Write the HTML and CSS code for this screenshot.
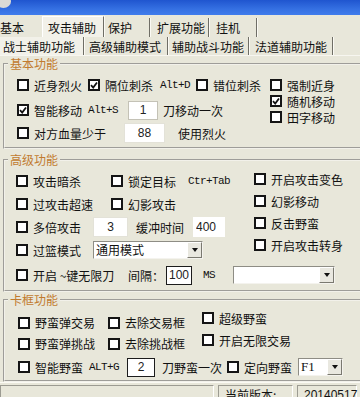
FILE: index.html
```html
<!DOCTYPE html>
<html lang="zh-CN">
<head>
  <meta charset="UTF-8" />
  <title>攻击辅助</title>
  <link rel="stylesheet" href="styles.css">
</head>
<body>
  <!-- 标题栏 -->
  <div class="titlebar"><span class="sysicon"></span></div>

  <!-- 主选项卡 -->
  <div class="tabs tabs-main">
    <div class="tab t1">基本</div>
    <div class="tab t2 active">攻击辅助</div>
    <div class="tab t3">保护</div>
    <div class="tab t4">扩展功能</div>
    <div class="tab t5">挂机</div>
  </div>
  <!-- 子选项卡 -->
  <div class="tabs tabs-sub">
    <div class="tab s1 active">战士辅助功能</div>
    <div class="tab s2">高级辅助模式</div>
    <div class="tab s3">辅助战斗功能</div>
    <div class="tab s4">法道辅助功能</div>
  </div>

  <!-- 基本功能 -->
  <fieldset class="group g-basic">
    <legend>基本功能</legend>
    <div class="group-body split">
      <div class="col-main">
        <div class="row r1">
          <label class="chk"><span class="box"></span>近身烈火</label>
          <label class="chk"><span class="box"><svg viewBox="0 0 8 8"><path d="M1 4.2 L3.2 6.5 L7 1.5"/></svg></span>隔位刺杀</label>
          <span class="key">Alt+D</span>
          <label class="chk"><span class="box"></span>错位刺杀</label>
        </div>
        <div class="row r2">
          <label class="chk"><span class="box"><svg viewBox="0 0 8 8"><path d="M1 4.2 L3.2 6.5 L7 1.5"/></svg></span>智能移动</label>
          <span class="key">Alt+S</span>
          <input class="num w30" value="1">
          <span>刀移动一次</span>
        </div>
        <div class="row r3">
          <label class="chk"><span class="box"></span>对方血量少于</label>
          <input class="num w41 soft" value="88">
          <span>使用烈火</span>
        </div>
      </div>
      <div class="col-side">
        <label class="chk"><span class="box"></span>强制近身</label>
        <label class="chk"><span class="box"><svg viewBox="0 0 8 8"><path d="M1 4.2 L3.2 6.5 L7 1.5"/></svg></span>随机移动</label>
        <label class="chk"><span class="box"></span>田字移动</label>
      </div>
    </div>
  </fieldset>

  <!-- 高级功能 -->
  <fieldset class="group g-adv">
    <legend>高级功能</legend>
    <div class="group-body">
      <div class="split">
        <div class="col-main">
          <div class="row r1">
            <label class="chk"><span class="box"></span>攻击暗杀</label>
            <label class="chk"><span class="box"></span>锁定目标</label>
            <span class="key">Ctr+Tab</span>
          </div>
          <div class="row r2">
            <label class="chk"><span class="box"></span>过攻击超速</label>
            <label class="chk"><span class="box"></span>幻影攻击</label>
          </div>
          <div class="row r3">
            <label class="chk"><span class="box"></span>多倍攻击</label>
            <input class="num w35 soft" value="3">
            <span>缓冲时间</span>
            <input class="num w32 bare" value="400">
          </div>
          <div class="row r4">
            <label class="chk"><span class="box"></span>过篮模式</label>
            <div class="dropdown w110"><span class="val">通用模式</span><span class="arrow"></span></div>
          </div>
        </div>
        <div class="col-side">
          <label class="chk"><span class="box"></span>开启攻击变色</label>
          <label class="chk"><span class="box"></span>幻影移动</label>
          <label class="chk"><span class="box"></span>反击野蛮</label>
          <label class="chk"><span class="box"></span>开启攻击转身</label>
        </div>
      </div>
      <div class="row r5">
        <label class="chk"><span class="box"></span>开启 ~键无限刀</label>
        <span>间隔：</span>
        <input class="num w26 dark left" value="100">
        <span class="key">MS</span>
        <div class="dropdown w102"><span class="val"></span><span class="arrow"></span></div>
      </div>
    </div>
  </fieldset>

  <!-- 卡框功能 -->
  <fieldset class="group g-box">
    <legend>卡框功能</legend>
    <div class="group-body">
      <div class="split">
        <div class="col-main">
          <div class="row r1">
            <label class="chk"><span class="box"></span>野蛮弹交易</label>
            <label class="chk"><span class="box"></span>去除交易框</label>
          </div>
          <div class="row r2">
            <label class="chk"><span class="box"></span>野蛮弹挑战</label>
            <label class="chk"><span class="box"></span>去除挑战框</label>
          </div>
        </div>
        <div class="col-side">
          <label class="chk"><span class="box"></span>超级野蛮</label>
          <label class="chk"><span class="box"></span>开启无限交易</label>
        </div>
      </div>
      <div class="row r3">
        <label class="chk"><span class="box"></span>智能野蛮</label>
        <span class="key">ALT+G</span>
        <input class="num w28 dark" value="2">
        <span>刀野蛮一次</span>
        <label class="chk"><span class="box"></span>定向野蛮</label>
        <div class="dropdown w45"><span class="val fkey">F1</span><span class="arrow"></span></div>
      </div>
    </div>
  </fieldset>

  <!-- 状态栏 -->
  <div class="statusbar">
    <div class="pane p1"></div>
    <div class="pane p2">当前版本:</div>
    <div class="pane p3">20140517</div>
  </div>
</body>
</html>
```

FILE: styles.css
```css
html, body { margin:0; padding:0; }
body {
  width:360px;
  height:397px;
  overflow:hidden;
  background:#e8e7da;
  font-family:"Noto Sans CJK SC", "Noto Sans", sans-serif;
  font-size:12px;
  color:#111;
}
/* 标题栏 */
.titlebar {
  position:relative;
  height:15px;
  background:linear-gradient(#1f55cf, #3570e2 60%, #3f7cec);
  overflow:hidden;
}
.titlebar .sysicon {
  position:absolute;
  left:-4px; top:-5px;
  width:15px; height:13px;
  border-radius:50%;
  background:#dcdbd6;
}
/* 选项卡 */
.tabs { display:flex; }
.tabs-main { height:22px; }
.tabs-sub { height:18px; border-bottom:1px solid #f7f6f0; }
.tab {
  box-sizing:border-box;
  display:flex;
  align-items:center;
  white-space:nowrap;
  border-right:1px solid #6f6e66;
  box-shadow:1px 0 0 #fbfaf4;
}
.tabs-main .tab { margin-top:3px; }
.tab.active { background:#f2f1e9; }
.tabs-main .tab.active { margin-top:1px; border-top:1px solid #fff; border-left:1px solid #fff; }
.t1 { width:42px; border-right:0; box-shadow:none; }
.t2 { width:62px; padding-left:5px; }
.t3 { width:46px; padding-left:4px; }
.t4 { width:59px; padding-left:7px; }
.t5 { width:48px; padding-left:7px; }
.s1 { width:84px; padding-left:3px; }
.s2 { width:84px; padding-left:5px; }
.s3 { width:81px; padding-left:4px; }
.s4 { width:84px; padding-left:6px; }
/* 分组框 */
.group {
  box-sizing:border-box;
  width:380px;
  min-width:0;
  margin:0 0 0 3px;
  padding:0;
  border:2px groove #f2f1ea;
}
.group legend {
  margin-left:3px;
  padding:0 2px;
  line-height:16px;
  color:#c17b2f;
}
.g-adv { margin-top:3px; }
.split { display:flex; }
.row { display:grid; align-items:center; white-space:nowrap; }
.col-side { display:flex; flex-direction:column; }
.col-side .chk { flex:none; }

.g-basic .group-body { padding:0 0 3px 12px; }
.g-basic .col-main { width:253px; }
.g-basic .r1 { height:26px; grid-template-columns:71px 72px 36px auto; }
.g-basic .r2 { height:24px; grid-template-columns:71px 40px 35px auto; }
.g-basic .r3 { height:22px; grid-template-columns:107px 54px auto; }
.g-basic .col-side { padding-top:5px; }
.g-basic .col-side .chk { height:16px; }

.g-adv .group-body { padding-left:11px; }
.g-adv .col-main { width:238px; }
.g-adv .r1 { height:26px; grid-template-columns:95px 77px auto; }
.g-adv .r2 { height:20px; grid-template-columns:95px auto; }
.g-adv .r3 { height:26px; grid-template-columns:77px 43px 57px auto; }
.g-adv .r4 { height:20px; grid-template-columns:77px auto; }
.g-adv .r5 { height:30px; grid-template-columns:112px 38px 37px 30px auto; }
.g-adv .col-side .chk { height:22px; }

.g-box .group-body { padding-left:13px; }
.g-box .col-main { width:184px; padding-top:4px; }
.g-box .r1, .g-box .r2 { height:21px; grid-template-columns:90px auto; }
.g-box .r3 { height:26px; grid-template-columns:71px 38px 35px 65px 71px auto; }
.g-box .col-side { margin-top:-1px; }
.g-box .col-side .chk { height:22px; }
/* 复选框 */
.chk { display:flex; align-items:center; gap:5px; }
.box {
  box-sizing:border-box;
  flex:none;
  width:12px; height:12px;
  border:2px solid #151515;
  background:#fff;
  display:flex;
  align-items:center;
  justify-content:center;
}
.box svg { width:8px; height:8px; }
.box path { fill:none; stroke:#111; stroke-width:1.8; }
.key {
  font-family:"Liberation Mono", monospace;
  font-size:11px;
  letter-spacing:-0.6px;
}
/* 输入框 */
.num {
  box-sizing:border-box;
  height:19px;
  margin:0;
  padding:0;
  border:1px solid #c4c2b6;
  background:#fff;
  font:12px "Liberation Sans", sans-serif;
  color:#222;
  text-align:center;
  outline:none;
}
.num.soft { height:20px; border-color:#e3e2d8; }
.num.dark { border-color:#1c1c1c; }
.num.bare { height:20px; border-color:#fff; text-align:left; padding-left:2px; }
.num.left { text-align:left; padding-left:2px; }
.w26 { width:26px; }
.w28 { width:28px; }
.w30 { width:30px; }
.w32 { width:32px; }
.w35 { width:35px; }
.w41 { width:41px; }
/* 下拉框 */
.dropdown {
  box-sizing:border-box;
  height:18px;
  display:flex;
  background:#fff;
  border:1px solid;
  border-color:#8e8d85 #f4f3ee #f4f3ee #8e8d85;
}
.dropdown .val { flex:1; padding-left:2px; line-height:16px; overflow:hidden; }
.dropdown .val.fkey { font-family:"Liberation Serif", serif; font-size:13px; }
.dropdown .arrow {
  box-sizing:border-box;
  width:15px;
  background:#e9e8e0;
  border:1px solid;
  border-color:#fff #7a7970 #7a7970 #fff;
  display:flex;
  align-items:center;
  justify-content:center;
}
.dropdown .arrow::after {
  content:"";
  border-left:3.5px solid transparent;
  border-right:3.5px solid transparent;
  border-top:4px solid #111;
}
.w45 { width:45px; }
.w102 { width:102px; }
.w110 { width:110px; }
/* 状态栏 */
.statusbar {
  display:flex;
  gap:4px;
  padding-top:2px;
  border-top:1px solid #fbfaf4;
}
.pane {
  box-sizing:border-box;
  height:20px;
  padding:1px 0 0 6px;
  line-height:16px;
  border:1px solid;
  border-color:#9c9b92 #fff #fff #9c9b92;
  white-space:nowrap;
}
.p1 { width:214px; }
.p2 { width:75px; }
.p3 { width:60px; font-family:"Liberation Sans", sans-serif; }
```
